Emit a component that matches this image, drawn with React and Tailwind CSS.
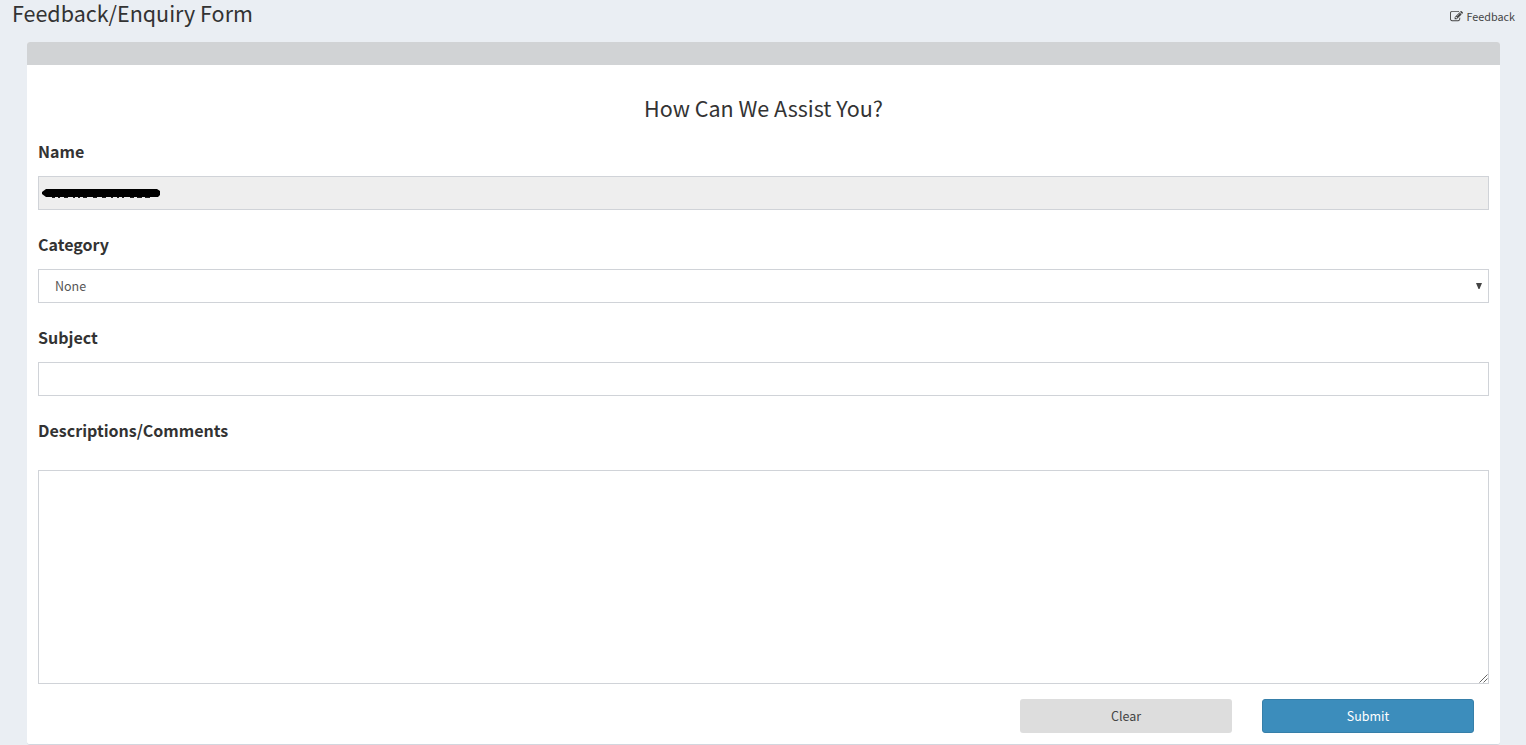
import React from "react";

const control =
  "block w-full rounded-none border border-[#d0d3d8] text-[12.5px] text-[#555] outline-none";

function EditIcon() {
  return (
    <svg viewBox="0 0 1792 1792" className="h-[13px] w-[13px] fill-[#444]" aria-hidden="true">
      <path d="M888 1184l116-116-152-152-116 116v56h96v96h56zm440-720q-16-16-33 1l-350 350q-17 17-1 33t33-1l350-350q17-17 1-33zm80 594v190q0 119-84.5 203.5t-203.5 84.5h-832q-119 0-203.5-84.5t-84.5-203.5v-832q0-119 84.5-203.5t203.5-84.5h832q63 0 117 25 15 7 18 23 3 17-9 29l-49 49q-14 14-32 8-23-6-45-6h-832q-66 0-113 47t-47 113v832q0 66 47 113t113 47h832q66 0 113-47t47-113v-126q0-13 9-22l64-64q15-15 35-7t20 29zm-96-738l288 288-672 672h-288v-288zm444 132l-92 92-288-288 92-92q28-28 68-28t68 28l152 152q28 28 28 68t-28 68z" />
    </svg>
  );
}

function Field({ label, children }) {
  return (
    <div className="h-[93px]">
      <label className="mb-[13px] block h-6 text-[16.05px] leading-6 font-bold text-[#333]">{label}</label>
      {children}
    </div>
  );
}

export default function App() {
  return (
    <div className="h-[745px] w-full overflow-hidden bg-[#eaeef3] font-['Noto_Sans_CJK_SC',sans-serif] text-[#333]">
      <header className="flex h-[42px] justify-between pr-[11px] pl-3">
        <h1 className="h-[26px] text-[21.5px] leading-[26px]">Feedback/Enquiry Form</h1>
        <a className="mt-[6px] flex h-5 items-center gap-1 text-[10.8px] leading-5 text-[#444]">
          <EditIcon />
          Feedback
        </a>
      </header>

      <main className="mr-[26px] ml-[27px] h-[703px] overflow-hidden rounded-[3px] border-b border-[#d2d6de] bg-white">
        <div className="h-[23px] bg-[#d1d3d5]" />
        <form className="px-[11px]">
          <h2 className="mb-[14px] pt-[25px] text-center text-[21.5px] leading-[35px]">How Can We Assist You?</h2>

          <Field label="Name">
            <div className={`${control} flex h-[34px] items-center bg-[#eee] pl-[3px]`}>
              <svg viewBox="0 0 118 11" className="h-[11px] w-[118px]" aria-hidden="true">
                <path d="M4 1H115L118 3V7L116 9H4L0 6V4Z" />
                <path
                  d="M10 9.5h3M16 9.5h2M22 9.5h4M31 9.5h2M36 9.5h2M41 9.5h4M51 9.5h4M60 9.5h4M69 9.5h2M75 9.5h2M80 9.5h2M88 9.5h4M95 9.5h5M103 9.5h5"
                  className="stroke-[#222]"
                  strokeWidth="1"
                />
              </svg>
            </div>
          </Field>

          <Field label="Category">
            <div className="relative">
              <select className={`${control} h-[34px] appearance-none bg-white pl-4`}>
                <option>None</option>
              </select>
              <svg viewBox="0 0 6 6" className="pointer-events-none absolute top-[14px] right-[7px] h-[6px] w-[6px] fill-[#444]" aria-hidden="true">
                <path d="M0 0H6L3.5 6H2.5Z" />
              </svg>
            </div>
          </Field>

          <Field label="Subject">
            <input className={`${control} h-[34px] bg-white px-3`} />
          </Field>

          <label className="mb-[28px] block h-6 text-[16.05px] leading-6 font-bold text-[#333]">Descriptions/Comments</label>
          <div className="relative">
            <textarea className={`${control} h-[214px] resize-none bg-white px-3`} />
            <svg viewBox="0 0 9 9" className="pointer-events-none absolute right-[1px] bottom-[1px] h-[9px] w-[9px] fill-none stroke-[#666]" aria-hidden="true">
              <path d="M0.5 8.5L8.5 0.5M4.5 8.5L8.5 4.5" />
            </svg>
          </div>

          <div className="mt-[15px] flex justify-end gap-[30px] pr-[15px]">
            <button type="reset" className="h-[34px] w-[212px] rounded-[3px] bg-[#ddd] text-[12.5px] text-[#444]">
              Clear
            </button>
            <button type="submit" className="h-[34px] w-[212px] rounded-[3px] border border-[#367fa9] bg-[#3c8dbc] text-[12.5px] text-white">
              Submit
            </button>
          </div>
        </form>
      </main>
    </div>
  );
}
